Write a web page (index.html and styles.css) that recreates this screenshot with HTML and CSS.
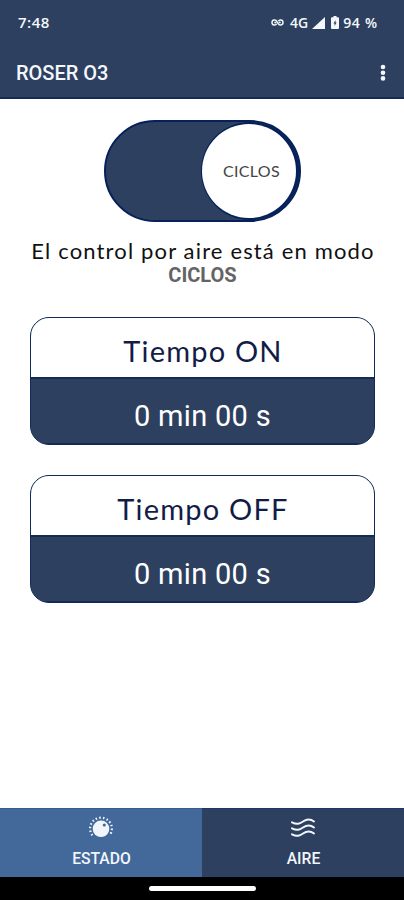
FILE: index.html
```
<!DOCTYPE html>
<html lang="es">
<head>
<meta charset="utf-8">
<title>ROSER O3</title>
<link rel="stylesheet" href="styles.css">
</head>
<body>
<div class="app">
  <header class="header">
    <div class="status">
      <span class="clock">7:48</span>
      <div class="indicators">
        <svg class="link" width="13" height="9" viewBox="0 0 13 9" fill="none" stroke="currentColor" stroke-width="1.500"><path d="M5.500 5.800C4.900 7.500 1 7.700 1 4.500S5 1.300 6 3.500L7 5.500C8 7.700 12 7.500 12 4.500S8.100 1.500 7.500 3.200M3.300 4.500h2M7.700 4.500h2"/></svg>
        <span class="net">4G</span>
        <svg class="signal" width="13" height="12" viewBox="0 0 13 12"><path d="M0 12 13 0v12z" fill="currentColor"/></svg>
        <svg class="battery" width="8" height="13" viewBox="0 0 8 13"><path d="M2.500 0h3v1.300H7q1 0 1 1V12q0 1-1 1H1q-1 0-1-1V2.300q0-1 1-1h1.500z" fill="currentColor"/><path d="M4.500 4 2.500 7.500h1.100V10L5.600 6.500H4.500z" fill="#2d405f"/></svg>
        <span class="percent">94 %</span>
      </div>
    </div>
    <div class="bar">
      <h1 class="title">ROSER O3</h1>
      <svg width="6" height="18" viewBox="0 0 6 18" fill="currentColor"><circle cx="3" cy="3" r="2.300"/><circle cx="3" cy="8.700" r="2.300"/><circle cx="3" cy="14.400" r="2.300"/></svg>
    </div>
  </header>
  <main class="content">
    <div class="toggle"><div class="knob"><span>CICLOS</span></div></div>
    <p class="message">El control por aire está en modo</p>
    <p class="mode">CICLOS</p>
    <section class="card">
      <h2 class="card-title">Tiempo ON</h2>
      <div class="card-value">0 min 00 s</div>
    </section>
    <section class="card">
      <h2 class="card-title">Tiempo OFF</h2>
      <div class="card-value">0 min 00 s</div>
    </section>
  </main>
  <nav class="tabs">
    <div class="tab active">
      <svg width="26" height="24" viewBox="0 0 26 24"><path d="M4.400 19.300A10.900 10.900 0 1 1 21.600 19.300" fill="none" stroke="currentColor" stroke-width="2.200" stroke-dasharray="1.500 2.240"/><circle cx="13" cy="12.800" r="8.300" fill="currentColor"/><circle cx="16.300" cy="9" r="1.600" fill="#43699a"/></svg>
      <span>ESTADO</span>
    </div>
    <div class="tab">
      <svg width="26" height="24" viewBox="0 0 26 24" fill="none" stroke="currentColor" stroke-width="2" stroke-linecap="round"><path d="M2 6.300C7 9 9.500 7.800 13 5.500S20 2.500 24 5.500M2 12.300C7 15 9.500 13.800 13 11.500S20 8.500 24 11.500M2 18.300C7 21 9.500 19.800 13 17.500S20 14.500 24 17.500"/></svg>
      <span>AIRE</span>
    </div>
  </nav>
  <footer class="system"><div class="handle"></div></footer>
</div>
</body>
</html>
```
FILE: styles.css
```
* { box-sizing: border-box; }
body { margin: 0; background: #fff; font-family: Roboto, sans-serif; }
h1, h2, p { margin: 0; }
svg { display: block; }
.app { width: 404px; height: 900px; display: flex; flex-direction: column; overflow: hidden; }
.header { height: 99px; background: #2d405f; color: #f4f7fc; border-bottom: 2px solid #142c55; }
.status { height: 46px; padding: 0 27px 0 18px; display: flex; align-items: center; justify-content: space-between; }
.clock { font: 600 15px/20px "Open Sans", sans-serif; letter-spacing: 0.500px; margin-top: -2px; }
.indicators { display: flex; align-items: center; font: 600 14px/20px "Open Sans", sans-serif; margin-top: -1px; }
.net { margin-left: 6px; }
.signal { margin-left: 4px; }
.battery { margin-left: 6px; }
.percent { margin-left: 4px; letter-spacing: 0.700px; margin-right: -0.700px; }
.bar { height: 53px; padding: 0 18px 0 16px; display: flex; align-items: center; justify-content: space-between; }
.title { font-size: 20px; line-height: 24px; font-weight: 500; }
.content { flex: 1; padding: 21px 29px 0 30px; }
.toggle { width: 197px; height: 102px; margin-left: 74px; padding-right: 3px; display: flex; justify-content: flex-end; align-items: center; border: 2px solid #06205a; border-radius: 51px; background: #2d405f; }
.knob { width: 94px; height: 94px; border-radius: 50%; background: #fff; box-shadow: 1px 0 0 2px #06205a; display: flex; align-items: center; justify-content: center; padding-left: 5px; color: #444; font: 400 16px/20px Lato, sans-serif; letter-spacing: 0.300px; }
.message { margin-top: 17px; padding-left: 1px; text-align: center; white-space: nowrap; color: #111; font: 400 22px/24px Lato, sans-serif; letter-spacing: 1.150px; }
.mode { margin-top: 1px; text-align: center; color: #646464; font-size: 20px; font-weight: 700; line-height: 22px; }
.card { height: 128px; border: 1.500px solid #102b59; border-radius: 19px; overflow: hidden; background: #2d405f; margin-top: 30px; text-align: center; }
.mode + .card { margin-top: 31px; }
.card-title { height: 59px; background: #fff; color: #121c47; font: 400 29px/66px Lato, sans-serif; letter-spacing: 1.200px; padding-left: 1px; }
.card-value { height: 67px; border-top: 2px solid #142c55; border-bottom: 1px solid #142c55; background: #2d405f; color: #fff; font-size: 29px; line-height: 74px; letter-spacing: 0.300px; }
.tabs { height: 69px; display: flex; color: #f2f6fc; font-size: 15.700px; font-weight: 500; }
.tab { flex: 1; display: flex; flex-direction: column; align-items: center; padding-top: 7px; background: #2d405f; border-top: 1px solid #1c3965; }
.tab.active { background: #43699a; border-top-color: #375d8e; }
.tab span { line-height: 20px; margin-top: 9px; padding-left: 1px; }
.system { height: 23px; background: #000; display: flex; justify-content: center; padding-top: 9px; }
.handle { width: 107px; height: 5px; border-radius: 3px; background: #fff; }
```
